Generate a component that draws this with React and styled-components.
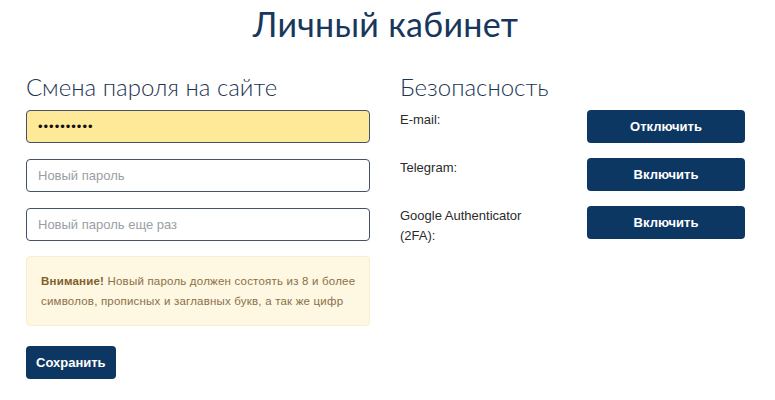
import React from 'react';
import styled, { createGlobalStyle } from 'styled-components';

const GlobalStyle = createGlobalStyle`
  body {
    margin: 0;
    background: #fff;
    font-family: "Liberation Sans", Arial, sans-serif;
  }
`;

const Page = styled.div`
  width: 775px;
  padding: 6px 30px 0 26px;
  box-sizing: border-box;
`;

const Title = styled.h1`
  margin: 0;
  text-align: center;
  font-family: Lato, "Open Sans", sans-serif;
  font-weight: 400;
  font-size: 34px;
  line-height: 36px;
  color: #17385c;
  letter-spacing: 0.3px;
`;

const Columns = styled.div`
  display: grid;
  grid-template-columns: 344px 345px;
  column-gap: 30px;
  margin-top: 30px;
`;

const Column = styled.section`
  display: flex;
  flex-direction: column;
`;

const Heading = styled.h2`
  margin: 0 0 8px;
  font-family: Lato, "Open Sans", sans-serif;
  font-weight: 300;
  font-size: 24px;
  line-height: 30px;
  color: #1d3553;
`;

const Fields = styled.div`
  display: flex;
  flex-direction: column;
  gap: 16px;
`;

const Input = styled.input`
  box-sizing: border-box;
  width: 100%;
  height: 33px;
  padding: 0 11px;
  border: 1px solid #45506a;
  border-radius: 4px;
  background: ${({ $filled }) => ($filled ? '#fee999' : '#fff')};
  font-family: "Liberation Sans", Arial, sans-serif;
  font-size: 13px;
  color: #111;
  letter-spacing: ${({ $filled }) => ($filled ? '1px' : '0')};
  outline: none;

  &::placeholder {
    color: #9a9ea6;
  }
`;

const Notice = styled.div`
  margin-top: 15px;
  padding: 14px 14px;
  background: #fef7e2;
  border: 1px solid #f8edd0;
  border-radius: 4px;
  font-size: 11.5px;
  letter-spacing: 0.2px;
  line-height: 20px;
  white-space: nowrap;
  color: #8b7048;

  b {
    color: #7f5e2c;
  }
`;

const Button = styled.button`
  box-sizing: border-box;
  height: 33px;
  width: ${({ $width }) => $width || 'auto'};
  padding: 0 10px;
  border: none;
  border-radius: 4px;
  background: #0d3763;
  color: #fff;
  font-family: "Liberation Sans", Arial, sans-serif;
  font-weight: 700;
  font-size: 13px;
  cursor: pointer;
`;

const SaveRow = styled.div`
  margin-top: 20px;
`;

const SecurityList = styled.div`
  display: flex;
  flex-direction: column;
  gap: 15px;
`;

const SecurityRow = styled.div`
  display: grid;
  grid-template-columns: 187px 158px;
  align-items: start;
`;

const Label = styled.div`
  font-size: 13px;
  line-height: 20px;
  color: #2b2b2b;
  max-width: 150px;
`;

const security = [
  { label: 'E-mail:', action: 'Отключить' },
  { label: 'Telegram:', action: 'Включить' },
  { label: 'Google Authenticator (2FA):', action: 'Включить' },
];

export default function App() {
  return (
    <Page>
      <GlobalStyle />
      <Title>Личный кабинет</Title>
      <Columns>
        <Column>
          <Heading>Смена пароля на сайте</Heading>
          <Fields>
            <Input $filled type="password" defaultValue="1234567890" />
            <Input type="password" placeholder="Новый пароль" />
            <Input type="password" placeholder="Новый пароль еще раз" />
          </Fields>
          <Notice>
            <b>Внимание!</b> Новый пароль должен состоять из 8 и более
            <br />
            символов, прописных и заглавных букв, а так же цифр
          </Notice>
          <SaveRow>
            <Button>Сохранить</Button>
          </SaveRow>
        </Column>
        <Column>
          <Heading>Безопасность</Heading>
          <SecurityList>
            {security.map((item) => (
              <SecurityRow key={item.label}>
                <Label>{item.label}</Label>
                <Button $width="158px">{item.action}</Button>
              </SecurityRow>
            ))}
          </SecurityList>
        </Column>
      </Columns>
    </Page>
  );
}
